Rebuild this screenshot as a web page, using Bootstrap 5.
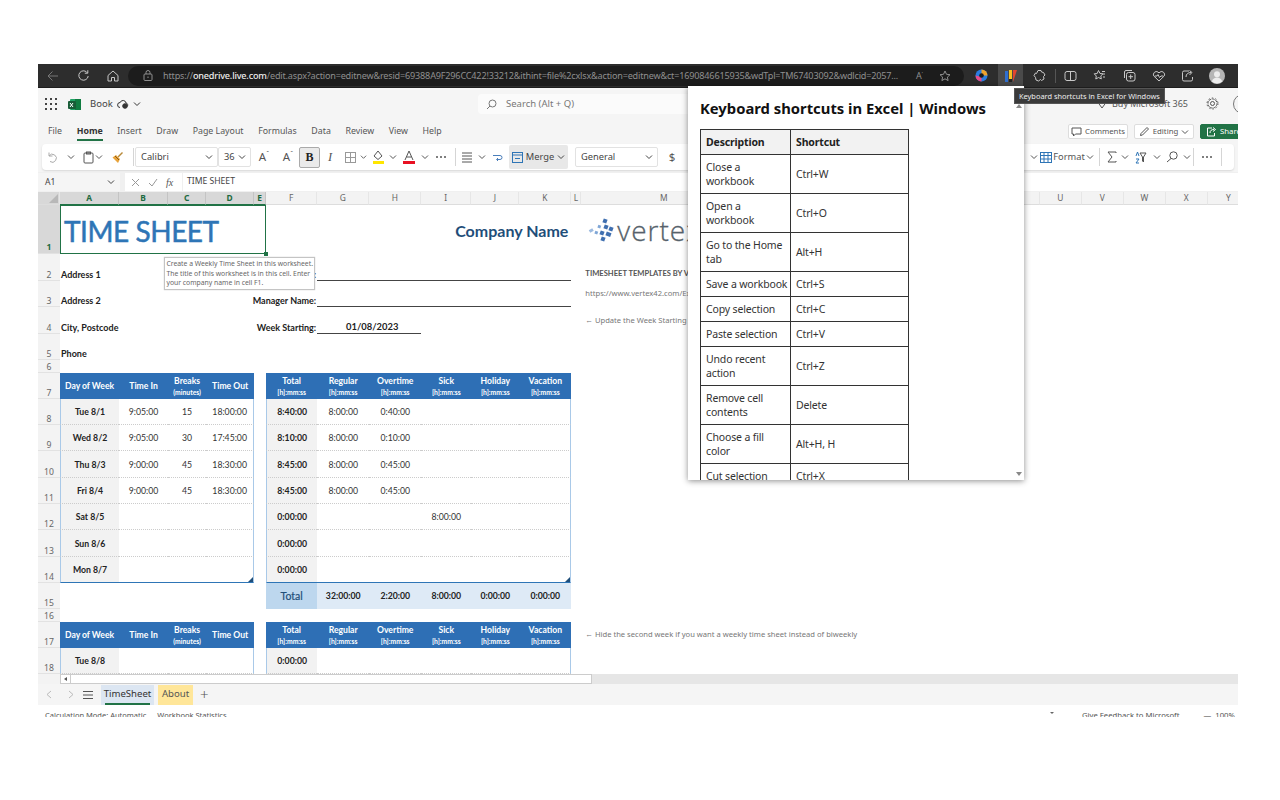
<!DOCTYPE html>
<html lang="en">
<head>
<meta charset="utf-8">
<title>Time Sheet - Excel</title>
<link href="https://cdn.jsdelivr.net/npm/bootstrap@5.3.0/dist/css/bootstrap.min.css" rel="stylesheet">
<style>
body{background:#fff;margin:0;font-family:"Noto Sans","Open Sans",sans-serif;color:#333}
.shotwin{margin:64px 0 0 38px;width:1200px;height:654px;overflow:hidden;position:relative;background:#fff}
.ic{display:block;fill:none;stroke:currentColor;stroke-width:1;flex:none}

/* browser */
.brbar{height:24px;background:#2d2d2d;color:#c8c8c8;border-bottom:1px solid #1d1d1d}
.brbtn{width:30px;justify-content:center;align-items:center;display:flex;flex:none}
.brbtn.dim{color:#777}
.urlpill{background:#1c1c1c;height:20px;width:836px;margin-left:0;margin-right:2.500px;border-radius:10px;padding-left:15px;font-size:9.100px;color:#8f8f8f;white-space:nowrap;overflow:hidden;flex:none}
.urlpill b{color:#eee;font-weight:500}
.urltext{width:745px;overflow:hidden;margin-left:10px;letter-spacing:-.02em}
.urlaa{margin-left:8px;font-size:9px}
.urlaa sup{font-size:6px}
.tool26{width:29.400px;height:24px;display:flex;align-items:center;justify-content:center;flex:none}
.tool26.on{background:linear-gradient(90deg,#2d2d2d 2px,#4a4a4a 2px,#4a4a4a 27px,#2d2d2d 27px)}
.brsep{width:1px;height:14px;background:#555;flex:none}

/* title */
.titlebar{height:32px;background:#f5f5f5;font-size:9.500px;position:relative}
.waffle{margin-left:7px;margin-right:11px}
.bookname{margin-left:9px;margin-right:4px;color:#444;padding-top:1px}
.searchbox{position:absolute;left:440px;top:6px;width:260px;height:20px;background:#fbfbfb;border-radius:4px;color:#777;font-size:9.500px;padding-left:8px;gap:9px}
.buyms{position:absolute;left:1059px;top:9px;color:#555;gap:5px;font-size:9px}
.gear{position:absolute;left:1168px;top:9px;color:#555}
.avatarc{position:absolute;left:1195px;top:6px;width:20px;height:20px;border:1px solid #777;border-radius:50%}

/* menu tabs */
.menubar{height:22px;background:#f5f5f5;font-size:8.800px;color:#555;padding-left:10px;position:relative;gap:14.600px}
.menutab{line-height:22px;position:relative}
.menutab.act{font-weight:700;color:#333}
.menutab.act::after{content:"";position:absolute;left:0;right:0;bottom:1px;height:2px;background:#217346}
.pillbtn{border:1px solid #ddd;background:#fff;border-radius:2px;height:15px;font-size:7.800px;color:#555;gap:3px;width:60px;justify-content:center;flex:none}
.rightbtns{position:absolute;left:1030px;top:4px;gap:6px}
.sharebtn{background:#217346;color:#fff;border-color:#217346;width:50px;justify-content:flex-start;padding-left:5px}

/* ribbon */
.ribbonbg{height:30px;background:#f5f5f5;padding:2px 4px 2px 4px}
.ribbon{height:26px;background:#fff;border-radius:4px;padding-left:1px;padding-right:11px;box-shadow:0 1px 2px rgba(0,0,0,.12);font-size:9.300px;color:#555}
.ti{display:flex;align-items:center;justify-content:center;height:26px;flex:none}
.w4{width:4px}.w7{width:7px}.w8{width:8px}.w10{width:10px}.w14{width:14px}.w18{width:18px}.w20{width:20px}.w21{width:21px}.w22{width:22px}.w24{width:24px}.w26{width:26px}.w28{width:28px}.w32{width:32px}.w33{width:33px}.w59{width:59px}.w83{width:83px}
.sepv{width:1px;height:18px;background:#d5d5d5;margin:0 auto}
.selbox{height:20px;border:1px solid #e2e2e2;border-radius:2px;padding:0 4px 0 5px;justify-content:space-between;color:#444}
.boldbtn{height:21px;background:#eaeaea;border:1px solid #aaa;border-radius:2px;font-weight:700;font-size:12px;color:#222;font-family:"Liberation Serif",serif}
.ital{font-family:"Liberation Serif",serif;font-style:italic;font-size:12.500px}
.mergebtn{background:#e8e8e8;height:24px;gap:3px;border-radius:2px;color:#444}
.cap{font-size:11.500px;color:#555}
.cap sup{font-size:7px}

/* formula */
.fxbar{height:20px;background:#f0f0f0;font-size:8.600px;color:#444;padding-top:1px}
.namebox{width:82px;height:18px;background:#f5f5f5;padding:0 5px 0 7px;justify-content:space-between;flex:none}
.fxbtns{width:57px;height:18px;margin-left:5px;background:#fff;color:#999;gap:8px;padding-left:6px;flex:none}
.fxinput{flex:1;height:18px;margin-left:1px;background:#fff;padding-left:4px;line-height:16px}
.fxlabel{font-family:"Liberation Serif",serif;font-style:italic;color:#555;font-size:10px}

/* sheet */
.sheetwrap{height:482px;overflow:hidden;position:relative}
.gridtbl{border-collapse:separate;border-spacing:0;table-layout:fixed;width:1212px;font-family:Lato,"Liberation Sans",sans-serif;font-size:9px;color:#222}
.gridtbl td,.gridtbl th{padding:0;white-space:nowrap;overflow:visible;line-height:1}
.gridtbl col.c0{width:22px}.gridtbl col.ca{width:59px}.gridtbl col.cb{width:49px}.gridtbl col.cc{width:38px}.gridtbl col.cd{width:48px}.gridtbl col.ce{width:12px}
.gridtbl col.cf{width:51px}.gridtbl col.cg{width:52px}.gridtbl col.ch{width:52px}.gridtbl col.ci{width:50px}.gridtbl col.cj{width:48px}.gridtbl col.ck{width:52px}.gridtbl col.cl{width:10px}.gridtbl col.cm{width:166px}.gridtbl col.cn{width:292px}.gridtbl col.cu{width:42px}
.hdrow{height:13px}
.hdrow th{font-family:"Noto Sans",sans-serif;font-size:8.400px;font-weight:400;color:#666;text-align:center;background:#f3f3f3;border-bottom:1px solid #ddd;border-right:1px solid #e6e6e6}
.hdrow th.colsel{background:#d8d8d8;color:#1e6b41;font-weight:700;border-bottom:1px solid #217346;border-right-color:#c4c4c4}
.hdrow th.corner{background:#d8d8d8;position:relative}
.hdrow th.corner::after{content:"";position:absolute;right:1px;bottom:1px;border-style:solid;border-width:0 0 9px 9px;border-color:transparent transparent #b8b8b8 transparent}
.rh{background:#f3f3f3;font-family:"Noto Sans",sans-serif;font-size:8.600px;color:#666;text-align:center;vertical-align:bottom;border-bottom:1px solid #e2e2e2}
.rh.rsel{background:#d8d8d8;color:#1e6b41;font-weight:700;padding-bottom:1px!important}
.h13{height:13px}.h26{height:26px}.h27{height:27px}.h49{height:49px}
.selcell{border:1.500px solid #217346;position:relative;vertical-align:middle;padding:3px 0 0 3px!important;box-sizing:border-box}
.selcell::after{content:"";position:absolute;right:-3px;bottom:-3px;width:4px;height:4px;background:#217346}
.sheettitle{font-size:28px;letter-spacing:-.45px;color:#2e75b6;font-weight:400;-webkit-text-stroke:.5px #2e75b6}
.company{font-size:16px;font-weight:700;color:#1f4e79;text-align:right;vertical-align:middle;padding:3px 3px 0 0!important}
.lbl{font-weight:700;vertical-align:bottom;padding:0 0 2px 1px!important;font-size:9px}
.lblr{text-align:right;padding:0 1px 2px 0!important}
.uline{border-bottom:1px solid #444}
.uval{text-align:center;font-weight:700;vertical-align:bottom;padding:0 0 2px 6px!important;font-size:9.400px}
.note{font-family:"Noto Sans",sans-serif;font-size:7.600px;color:#777;padding-left:4px!important}
.note.strong{font-weight:700;color:#555;font-family:Lato,sans-serif;font-size:7.600px;vertical-align:bottom;padding-bottom:3px!important}
.hcell{background:#2e6fb5;color:#fff;text-align:center;font-weight:700;font-size:8.600px;vertical-align:middle;padding-top:1px!important}
.hcell small{display:block;font-size:6.800px;margin-top:4px;font-weight:700}
.dcell{text-align:center;vertical-align:middle;border-bottom:1px dotted #ccc;color:#333;font-size:8.700px;padding-top:2px!important}
.dcell.end{border-bottom:1px solid #2e75b6}
.dcell.gray{background:#f2f2f2;font-weight:700;color:#222}
.bl{border-left:1px solid #a9c9e8}
.brr{border-right:1px solid #a9c9e8}
.cornermark{position:relative}
.cornermark::after{content:"";position:absolute;right:0;bottom:0;border-style:solid;border-width:0 0 5px 5px;border-color:transparent transparent #1f4e79 transparent}
.totlbl{background:#bdd7ee;color:#1f4e79;font-size:10.500px;text-align:center;font-weight:400;-webkit-text-stroke:.2px #1f4e79;vertical-align:middle}
.totval{background:#deeaf6;font-weight:700;text-align:center;vertical-align:middle;font-size:8.700px;color:#222}
.notebox{position:absolute;left:126px;top:65px;width:151px;height:33px;background:#fff;border:1px solid #c4c4c4;box-shadow:0 0 1px #bbb;font-family:"Noto Sans",sans-serif;font-size:6.800px;line-height:9.600px;color:#666;padding:1px 0 0 1.500px;white-space:nowrap;z-index:2}
.logoword{font-family:"Open Sans",sans-serif;font-weight:300;font-size:28px;color:#56626b;letter-spacing:1px;-webkit-text-stroke:.3px #56626b}
.logocell{vertical-align:middle;padding-left:5px!important}
.logoflex{gap:3px}

/* bottom */
.hscroll{height:10px;background:#e6e6e6}
.hs0{width:22px;background:#f3f3f3}
.hsbtn{width:11px;background:#fff;border:1px solid #ccc;flex:none;display:flex;align-items:center;justify-content:center}
.hsbtn::before{content:"";border-style:solid;border-width:2.500px 3px 2.500px 0;border-color:transparent #555 transparent transparent}
.hsthumb{width:521px;background:#fff;border:1px solid #ccc;border-left:0;flex:none}
.tabbar{height:21px;background:#f5f5f5;font-size:9.600px;color:#555}
.navch{color:#bbb;width:22px;justify-content:center;flex:none}
.navburger{margin-left:1px}
.shtab{height:20px;line-height:18px;text-align:center;position:relative;flex:none}
.shtab.tcur{background:#dce6f2;width:53px;margin-left:8px;margin-right:4px;color:#333}
.shtab.tcur::after{content:"";position:absolute;left:4px;right:4px;bottom:0;height:2px;background:#217346}
.shtab.tabout{background:#ffe699;width:35px}
.plusb{font-size:15px;color:#555;margin-left:7px;font-weight:300;line-height:1}
.statusb{height:12px;background:#fff;font-size:7.500px;color:#555;position:relative;overflow:hidden;line-height:20px;padding-left:7px;white-space:nowrap}
.statusb span{display:inline-block;margin-right:11px}
.statright{position:absolute;left:1044px;top:0;white-space:nowrap;font-size:7.700px}
.statright span{margin-right:24px}
.statright span:last-child{margin-right:0}
.carret{position:absolute;left:1012px;top:7px;border-style:solid;border-width:2px 2px 0 2px;border-color:#666 transparent transparent transparent}

/* popup */
.popupext{position:absolute;left:650px;top:22px;width:336px;height:394px;background:#fff;box-shadow:0 1px 6px rgba(0,0,0,.45);overflow:hidden;z-index:5;padding:11px 12px 0 12px}
.popupext h1{font-family:"Noto Sans","Open Sans",sans-serif;font-weight:700;font-size:14.800px;color:#111;margin:0 0 10px 0;line-height:22px;white-space:nowrap}
.sctable{width:209px;table-layout:fixed;font-size:10.500px;letter-spacing:-.15px;line-height:14px;color:#333;border-color:#333;margin:0}
.sctable td,.sctable th{padding:5px 0 5px 5px;vertical-align:middle;border:1px solid #333;color:#333;background:#fff;box-shadow:none}
.sctable th{background:#f2f2f2;font-weight:700;color:#222}
.sctable .c1{width:90px}
.scup,.scdn{position:absolute;left:328px;border-style:solid}
.scup{top:18px;border-width:0 3px 4px 3px;border-color:transparent transparent #888 transparent}
.scdn{top:386px;border-width:4px 3px 0 3px;border-color:#888 transparent transparent transparent}
.exttip{position:absolute;left:976px;top:24px;background:#3a3a3a;color:#eee;font-size:7.400px;height:16px;line-height:15px;width:151px;padding-left:4px;z-index:6;white-space:nowrap;border:1px solid #555}
</style>
</head>
<body>
<svg width="0" height="0" class="position-absolute">
  <symbol id="chev" viewBox="0 0 8 8"><path d="M1 2.500 4 5.500 7 2.500" fill="none" stroke="currentColor"/></symbol>
  <symbol id="dots3" viewBox="0 0 12 4"><circle cx="2" cy="2" r="1" fill="currentColor"/><circle cx="6" cy="2" r="1" fill="currentColor"/><circle cx="10" cy="2" r="1" fill="currentColor"/></symbol>
</svg>
<div class="shotwin">

  <!-- browser toolbar -->
  <div class="brbar d-flex align-items-center">
    <div class="brbtn dim"><svg class="ic" width="12" height="12" viewBox="0 0 12 12"><path d="M11 6H1M5.500 1.500 1 6l4.500 4.500"/></svg></div>
    <div class="brbtn"><svg class="ic" width="13" height="13" viewBox="0 0 13 13"><path d="M10.500 4A4.700 4.700 0 1 0 11.200 7M10.800 1.200V4.200H7.800"/></svg></div>
    <div class="brbtn"><svg class="ic" width="12" height="12" viewBox="0 0 12 12"><path d="M1 5.500 6 1l5 4.500V11H7.500V7.500h-3V11H1z"/></svg></div>
    <div class="urlpill d-flex align-items-center">
      <svg class="ic" width="10" height="11" viewBox="0 0 10 11"><rect x="1" y="4" width="8" height="6.500" rx="1"/><path d="M3 4V2.500a2 2 0 0 1 4 0V4M5 6.500v1.500"/></svg>
      <div class="urltext">https://<b>onedrive.live.com</b>/edit.aspx?action=editnew&amp;resid=69388A9F296CC422!33212&amp;ithint=file%2cxlsx&amp;action=editnew&amp;ct=1690846615935&amp;wdTpl=TM67403092&amp;wdlcid=2057...</div>
      <span class="urlaa">A<sup>ʼ</sup></span>
      <svg class="ic ms-3" width="12" height="12" viewBox="0 0 12 12"><path d="M6 1l1.500 3.300 3.500.4-2.600 2.400.7 3.500L6 8.800 2.900 10.600l.7-3.500L1 4.700l3.500-.4z"/></svg>
    </div>
    <div class="tool26"><svg width="13" height="13" viewBox="0 0 13 13"><circle cx="6.500" cy="6.500" r="6" fill="#2a7de1"/><path d="M6.500 .5a6 6 0 0 1 6 6H6.500z" fill="#f0a32b"/><path d="M.5 6.500a6 6 0 0 0 6 6V8z" fill="#e94b8a"/><circle cx="6.500" cy="6.500" r="2.300" fill="#1c1c1c"/></svg></div>
    <div class="tool26 on"><svg width="14" height="14" viewBox="0 0 14 14"><rect x="1" y="2" width="3" height="11" fill="#2f6fd0"/><rect x="5" y="1" width="3" height="9" fill="#f4c020"/><path d="M9 1h4L9 13z" fill="#e0452f"/><rect x="5" y="10" width="3" height="3" fill="#222"/></svg></div>
    <div class="tool26"><svg class="ic" width="13" height="13" viewBox="0 0 13 13"><path d="M5 1.500h3l.5 1.500 2 .5L12 6l-1.500 1.500L11 10 8.500 11.500l-1-1-2 1.500L3 11 2.500 8.500 1 6.500 2.500 4l1 .5z"/></svg></div>
    <div class="brsep"></div>
    <div class="tool26"><svg class="ic" width="13" height="12" viewBox="0 0 13 12"><rect x="1" y="1.500" width="11" height="9" rx="2"/><path d="M6.500 1.500v9"/></svg></div>
    <div class="tool26"><svg class="ic" width="13" height="13" viewBox="0 0 13 13"><path d="M5.500 1.500 7 4.500l3 .3-2.200 2.100.5 3L5.500 8.500 2.800 10l.5-3L1.200 4.800l3-.3zM9 2.500h3M10 5h2M10 8h2"/></svg></div>
    <div class="tool26"><svg class="ic" width="13" height="13" viewBox="0 0 13 13"><rect x="3.500" y="3.500" width="8.500" height="8.500" rx="2"/><path d="M1.500 9V3A1.500 1.500 0 0 1 3 1.500h6M7.700 5.500v4.500M5.500 7.700H10"/></svg></div>
    <div class="tool26"><svg class="ic" width="14" height="12" viewBox="0 0 14 12"><path d="M7 11 1.800 6A3 3 0 0 1 6 2l1 1 1-1a3 3 0 0 1 4.200 4zM3 6h2l1-1.500 1.500 3L9 6h2"/></svg></div>
    <div class="tool26"><svg class="ic" width="13" height="13" viewBox="0 0 13 13"><path d="M8 2H3a1.500 1.500 0 0 0-1.500 1.500v7A1.500 1.500 0 0 0 3 12h7a1.500 1.500 0 0 0 1.500-1.500V8M5 8c0-3 2-4.500 5-4.500M8.500 1.500l2.500 2-2.500 2.500"/></svg></div>
    <div class="tool26"><svg width="16" height="16" viewBox="0 0 16 16"><circle cx="8" cy="8" r="8" fill="#b5b5b5"/><circle cx="8" cy="6.200" r="3" fill="#ececec"/><path d="M2.800 13.500c1-3 3-4 5.200-4s4.200 1 5.200 4a8 8 0 0 1-10.400 0z" fill="#ececec"/></svg></div>
  </div>

  <!-- excel title -->
  <div class="titlebar d-flex align-items-center">
    <svg class="waffle" width="12" height="12" viewBox="0 0 12 12" fill="#444"><rect x="0" y="0" width="2" height="2"/><rect x="5" y="0" width="2" height="2"/><rect x="10" y="0" width="2" height="2"/><rect x="0" y="5" width="2" height="2"/><rect x="5" y="5" width="2" height="2"/><rect x="10" y="5" width="2" height="2"/><rect x="0" y="10" width="2" height="2"/><rect x="5" y="10" width="2" height="2"/><rect x="10" y="10" width="2" height="2"/></svg>
    <svg width="13" height="13" viewBox="0 0 13 13"><rect x="2" y="1" width="11" height="11" rx="1" fill="#21a366"/><rect x="7" y="1" width="6" height="11" fill="#107c41"/><rect x="0" y="3" width="8" height="8" rx="1" fill="#185c37"/><path d="M2 5l3 4M5 5 2 9" stroke="#fff" stroke-width="1"/></svg>
    <span class="bookname">Book</span>
    <svg class="ic me-1" width="12" height="10" viewBox="0 0 12 10"><path d="M3 8.500a2.500 2.500 0 0 1 .2-5A3 3 0 0 1 9 4a2 2 0 0 1 1 3.500"/><circle cx="8" cy="7" r="2.300" fill="#333"/></svg>
    <svg width="8" height="8"><use href="#chev"/></svg>
    <div class="searchbox d-flex align-items-center">
      <svg class="ic" width="11" height="11" viewBox="0 0 11 11"><circle cx="6.500" cy="4.500" r="3.500"/><path d="M4 7 1 10"/></svg>
      <span>Search (Alt + Q)</span>
    </div>
    <div class="buyms d-flex align-items-center">
      <svg class="ic" width="10" height="10" viewBox="0 0 10 10"><path d="M1 3.500 5 9l4-5.500L7.500 1h-5z"/></svg>
      <span>Buy Microsoft 365</span>
    </div>
    <svg class="ic gear" width="13" height="13" viewBox="0 0 13 13"><circle cx="6.500" cy="6.500" r="2"/><circle cx="6.500" cy="6.500" r="4.500" stroke-dasharray="2.400 1"/><circle cx="6.500" cy="6.500" r="5.500" stroke-dasharray="1.500 2"/></svg>
    <div class="avatarc"></div>
  </div>

  <!-- ribbon tabs -->
  <div class="menubar d-flex">
    <div class="menutab">File</div>
    <div class="menutab act">Home</div>
    <div class="menutab">Insert</div>
    <div class="menutab">Draw</div>
    <div class="menutab">Page Layout</div>
    <div class="menutab">Formulas</div>
    <div class="menutab">Data</div>
    <div class="menutab">Review</div>
    <div class="menutab">View</div>
    <div class="menutab">Help</div>
    <div class="rightbtns d-flex">
      <div class="pillbtn d-flex align-items-center"><svg class="ic" width="11" height="10" viewBox="0 0 11 10"><path d="M1 1h9v6H4.500L2.500 9V7H1z"/></svg>Comments</div>
      <div class="pillbtn d-flex align-items-center"><svg class="ic" width="11" height="11" viewBox="0 0 11 11"><path d="M1.500 9.500 2 7.500 8 1.500l1.500 1.500-6 6z"/></svg>Editing<svg width="8" height="8"><use href="#chev"/></svg></div>
      <div class="pillbtn sharebtn d-flex align-items-center"><svg class="ic" width="11" height="11" viewBox="0 0 11 11"><path d="M6 2H1.500v8h7V7M4 7c0-2.500 1.500-3.500 4-3.500M7 1.500 9.500 3.500 7 5.500"/></svg>Share</div>
    </div>
  </div>

  <!-- ribbon -->
  <div class="ribbonbg">
    <div class="ribbon d-flex align-items-center">
      <div class="ti w18"><svg class="ic" width="12" height="12" viewBox="0 0 12 12" color="#aaa"><path d="M3 1.500V5h3.500M3 5a4 4 0 1 1 1 5.500"/></svg></div>
      <div class="ti w20"><svg width="8" height="8"><use href="#chev"/></svg></div>
      <div class="ti w14"><svg class="ic" width="11" height="13" viewBox="0 0 11 13"><rect x="1" y="2" width="9" height="10" rx="1"/><rect x="3.500" y="1" width="4" height="2" fill="#999"/></svg></div>
      <div class="ti w8"><svg width="8" height="8"><use href="#chev"/></svg></div>
      <div class="ti w28"><svg width="13" height="13" viewBox="0 0 13 13"><path d="M7 6 11.500 1.500" stroke="#b88a3a" stroke-width="1.500"/><path d="M5 4 9 8 7 12 1.500 6.500z" fill="#e8a33a"/><path d="M4 5 8 9" stroke="#8a5b18"/></svg></div>
      <div class="ti w4"><div class="sepv"></div></div>
      <div class="ti w83 selbox"><span>Calibri</span><svg width="8" height="8"><use href="#chev"/></svg></div>
      <div class="ti w33 selbox"><span>36</span><svg width="8" height="8"><use href="#chev"/></svg></div>
      <div class="ti w26 cap">A<sup>ˆ</sup></div>
      <div class="ti w22 cap">A<sup>ˇ</sup></div>
      <div class="ti w21 boldbtn">B</div>
      <div class="ti w20 ital">I</div>
      <div class="ti w20"><svg class="ic" width="11" height="11" viewBox="0 0 11 11" color="#999"><rect x=".5" y=".5" width="10" height="10"/><path d="M5.500 .5v10M.5 5.500h10"/></svg></div>
      <div class="ti w7"><svg width="8" height="8"><use href="#chev"/></svg></div>
      <div class="ti w22"><svg width="13" height="14" viewBox="0 0 13 14"><path d="M6 1 2 6l4 3.500L10 6z" fill="none" stroke="#555"/><rect x="1" y="11" width="11" height="3" fill="#ffe600"/></svg></div>
      <div class="ti w8"><svg width="8" height="8"><use href="#chev"/></svg></div>
      <div class="ti w24"><svg width="12" height="14" viewBox="0 0 12 14"><path d="M2 10 6 1l4 9M3.500 7h5" fill="none" stroke="#555"/><rect x="0" y="11" width="12" height="3" fill="#e81123"/></svg></div>
      <div class="ti w8"><svg width="8" height="8"><use href="#chev"/></svg></div>
      <div class="ti w24"><svg width="12" height="4"><use href="#dots3"/></svg></div>
      <div class="ti w4"><div class="sepv"></div></div>
      <div class="ti w20"><svg class="ic" width="12" height="11" viewBox="0 0 12 11"><path d="M1 1h10M1 4h10M1 7h10M1 10h10"/></svg></div>
      <div class="ti w10"><svg width="8" height="8"><use href="#chev"/></svg></div>
      <div class="ti w22"><svg class="ic" width="12" height="13" viewBox="0 0 12 13" color="#4a7ebb"><path d="M1 4.500h7a2 2 0 0 1 0 4H5M6 7 4.500 8.500 6 10"/></svg></div>
      <div class="ti w59 mergebtn"><svg class="ic" width="11" height="11" viewBox="0 0 11 11" color="#2e75b6"><rect x=".5" y=".5" width="10" height="10"/><path d="M.5 3h10M3 6.500h5"/></svg><span>Merge</span><svg width="8" height="8"><use href="#chev"/></svg></div>
      <div class="ti w7"></div>
      <div class="ti w83 selbox"><span>General</span><svg width="8" height="8"><use href="#chev"/></svg></div>
      <div class="ti w28 cap">$</div>

      <div class="ti w10 ms-auto"><svg width="8" height="8"><use href="#chev"/></svg></div>
      <div class="ti w14"><svg class="ic" width="12" height="11" viewBox="0 0 12 11" color="#2e75b6"><rect x=".5" y=".5" width="11" height="10"/><path d="M.5 3.500h11M.5 7h11M4 .5v10M8 .5v10"/></svg></div>
      <div class="ti w32">Format</div>
      <div class="ti w10"><svg width="8" height="8"><use href="#chev"/></svg></div>
      <div class="ti w8"><div class="sepv"></div></div>
      <div class="ti w18"><svg class="ic" width="10" height="12" viewBox="0 0 10 12"><path d="M9 2V1H1l4 5-4 5h8v-1"/></svg></div>
      <div class="ti w8"><svg width="8" height="8"><use href="#chev"/></svg></div>
      <div class="ti w24"><svg class="ic" width="12" height="13" viewBox="0 0 12 13"><path d="M5 2h6L8.500 6v5l-1-1V6z"/><path d="M1 5l1.500-4L4 5M1 8h3L1 12h3" color="#2e75b6"/></svg></div>
      <div class="ti w8"><svg width="8" height="8"><use href="#chev"/></svg></div>
      <div class="ti w22"><svg class="ic" width="12" height="12" viewBox="0 0 12 12"><circle cx="7.500" cy="4.500" r="3.700"/><path d="M5 7.500 1 11"/></svg></div>
      <div class="ti w8"><svg width="8" height="8"><use href="#chev"/></svg></div>
      <div class="ti w4"><div class="sepv"></div></div>
      <div class="ti w24"><svg width="12" height="4"><use href="#dots3"/></svg></div>
      <div class="ti w4"><div class="sepv"></div></div>
    </div>
  </div>

  <!-- formula bar -->
  <div class="fxbar d-flex">
    <div class="namebox d-flex align-items-center"><span>A1</span><svg width="8" height="8"><use href="#chev"/></svg></div>
    <div class="fxbtns d-flex align-items-center">
      <svg class="ic" width="9" height="9" viewBox="0 0 9 9"><path d="M1 1l7 7M8 1 1 8"/></svg>
      <svg class="ic" width="10" height="9" viewBox="0 0 10 9"><path d="M1 5l3 3 5-7"/></svg>
      <span class="fxlabel">fx</span>
    </div>
    <div class="fxinput">TIME SHEET</div>
  </div>

  <!-- grid -->
  <div class="sheetwrap">
    <table class="gridtbl">
      <colgroup><col class="c0"><col class="ca"><col class="cb"><col class="cc"><col class="cd"><col class="ce"><col class="cf"><col class="cg"><col class="ch"><col class="ci"><col class="cj"><col class="ck"><col class="cl"><col class="cm"><col class="cn"><col class="cu"><col class="cu"><col class="cu"><col class="cu"><col class="cu"></colgroup>
      <tr class="hdrow"><th class="corner"></th><th class="colsel">A</th><th class="colsel">B</th><th class="colsel">C</th><th class="colsel">D</th><th class="colsel">E</th><th>F</th><th>G</th><th>H</th><th>I</th><th>J</th><th>K</th><th>L</th><th>M</th><th></th><th>U</th><th>V</th><th>W</th><th>X</th><th>Y</th></tr>
      <tr class="h49"><td class="rh rsel">1</td><td colspan="5" class="selcell"><span class="sheettitle">TIME SHEET</span></td><td colspan="6" class="company">Company Name</td><td></td><td class="logocell"><div class="d-flex align-items-center logoflex"><svg width="28" height="26" viewBox="0 0 28 26"><g fill="#3f6fb0"><rect x="17" y="2" width="4" height="4" transform="rotate(20 19 4)"/><rect x="12" y="8" width="3" height="3" transform="rotate(20 13 9)" fill="#7fa6d6"/><rect x="18" y="8" width="4" height="4" transform="rotate(20 20 10)"/><rect x="23" y="10" width="4" height="4" transform="rotate(20 25 12)"/><rect x="3" y="12" width="4" height="3" transform="rotate(-30 5 13)" fill="#9dbbe0"/><rect x="9" y="14" width="3" height="3" transform="rotate(20 10 15)" fill="#7fa6d6"/><rect x="14" y="14" width="4" height="4" transform="rotate(20 16 16)"/><rect x="20" y="15" width="5" height="4" transform="rotate(20 22 17)"/><rect x="15" y="20" width="4" height="4" transform="rotate(20 17 22)"/></g></svg><span class="logoword">vertex42</span></div></td></tr>
      <tr class="h27"><td class="rh">2</td><td colspan="3" class="lbl">Address 1</td><td colspan="3" class="lbl lblr">Employee Name:</td><td class="uline"></td><td class="uline"></td><td class="uline"></td><td class="uline"></td><td class="uline"></td><td></td><td class="note strong">TIMESHEET TEMPLATES BY VERTEX42</td></tr>
      <tr class="h26"><td class="rh">3</td><td colspan="3" class="lbl">Address 2</td><td colspan="3" class="lbl lblr">Manager Name:</td><td class="uline"></td><td class="uline"></td><td class="uline"></td><td class="uline"></td><td class="uline"></td><td></td><td class="note">https://www.vertex42.com/ExcelTemplates/time-sheet.html</td></tr>
      <tr class="h27"><td class="rh">4</td><td colspan="3" class="lbl">City, Postcode</td><td colspan="3" class="lbl lblr">Week Starting:</td><td colspan="2" class="uline uval">01/08/2023</td><td colspan="4"></td><td class="note">← Update the Week Starting date to change the dates in the table</td></tr>
      <tr class="h26"><td class="rh">5</td><td colspan="5" class="lbl">Phone</td></tr>
      <tr class="h13"><td class="rh">6</td></tr>
      <tr class="h26"><td class="rh">7</td><td class="hcell">Day of Week</td><td class="hcell">Time In</td><td class="hcell">Breaks<small>(minutes)</small></td><td class="hcell">Time Out</td><td></td><td class="hcell">Total<small>[h]:mm:ss</small></td><td class="hcell">Regular<small>[h]:mm:ss</small></td><td class="hcell">Overtime<small>[h]:mm:ss</small></td><td class="hcell">Sick<small>[h]:mm:ss</small></td><td class="hcell">Holiday<small>[h]:mm:ss</small></td><td class="hcell">Vacation<small>[h]:mm:ss</small></td></tr>
      <tr class="h26"><td class="rh">8</td><td class="dcell gray bl">Tue 8/1</td><td class="dcell">9:05:00</td><td class="dcell">15</td><td class="dcell brr">18:00:00</td><td></td><td class="dcell gray bl">8:40:00</td><td class="dcell">8:00:00</td><td class="dcell">0:40:00</td><td class="dcell"></td><td class="dcell"></td><td class="dcell brr"></td></tr>
      <tr class="h26"><td class="rh">9</td><td class="dcell gray bl">Wed 8/2</td><td class="dcell">9:05:00</td><td class="dcell">30</td><td class="dcell brr">17:45:00</td><td></td><td class="dcell gray bl">8:10:00</td><td class="dcell">8:00:00</td><td class="dcell">0:10:00</td><td class="dcell"></td><td class="dcell"></td><td class="dcell brr"></td></tr>
      <tr class="h27"><td class="rh">10</td><td class="dcell gray bl">Thu 8/3</td><td class="dcell">9:00:00</td><td class="dcell">45</td><td class="dcell brr">18:30:00</td><td></td><td class="dcell gray bl">8:45:00</td><td class="dcell">8:00:00</td><td class="dcell">0:45:00</td><td class="dcell"></td><td class="dcell"></td><td class="dcell brr"></td></tr>
      <tr class="h26"><td class="rh">11</td><td class="dcell gray bl">Fri 8/4</td><td class="dcell">9:00:00</td><td class="dcell">45</td><td class="dcell brr">18:30:00</td><td></td><td class="dcell gray bl">8:45:00</td><td class="dcell">8:00:00</td><td class="dcell">0:45:00</td><td class="dcell"></td><td class="dcell"></td><td class="dcell brr"></td></tr>
      <tr class="h26"><td class="rh">12</td><td class="dcell gray bl">Sat 8/5</td><td class="dcell"></td><td class="dcell"></td><td class="dcell brr"></td><td></td><td class="dcell gray bl">0:00:00</td><td class="dcell"></td><td class="dcell"></td><td class="dcell">8:00:00</td><td class="dcell"></td><td class="dcell brr"></td></tr>
      <tr class="h27"><td class="rh">13</td><td class="dcell gray bl">Sun 8/6</td><td class="dcell"></td><td class="dcell"></td><td class="dcell brr"></td><td></td><td class="dcell gray bl">0:00:00</td><td class="dcell"></td><td class="dcell"></td><td class="dcell"></td><td class="dcell"></td><td class="dcell brr"></td></tr>
      <tr class="h26"><td class="rh">14</td><td class="dcell gray bl end">Mon 8/7</td><td class="dcell end"></td><td class="dcell end"></td><td class="dcell brr end cornermark"></td><td></td><td class="dcell gray bl end">0:00:00</td><td class="dcell end"></td><td class="dcell end"></td><td class="dcell end"></td><td class="dcell end"></td><td class="dcell brr end cornermark"></td></tr>
      <tr class="h26"><td class="rh">15</td><td colspan="4"></td><td></td><td class="totlbl">Total</td><td class="totval">32:00:00</td><td class="totval">2:20:00</td><td class="totval">8:00:00</td><td class="totval">0:00:00</td><td class="totval">0:00:00</td></tr>
      <tr class="h13"><td class="rh">16</td></tr>
      <tr class="h26"><td class="rh">17</td><td class="hcell">Day of Week</td><td class="hcell">Time In</td><td class="hcell">Breaks<small>(minutes)</small></td><td class="hcell">Time Out</td><td></td><td class="hcell">Total<small>[h]:mm:ss</small></td><td class="hcell">Regular<small>[h]:mm:ss</small></td><td class="hcell">Overtime<small>[h]:mm:ss</small></td><td class="hcell">Sick<small>[h]:mm:ss</small></td><td class="hcell">Holiday<small>[h]:mm:ss</small></td><td class="hcell">Vacation<small>[h]:mm:ss</small></td><td></td><td class="note">← Hide the second week if you want a weekly time sheet instead of biweekly</td></tr>
      <tr class="h26"><td class="rh">18</td><td class="dcell gray bl">Tue 8/8</td><td class="dcell"></td><td class="dcell"></td><td class="dcell brr"></td><td></td><td class="dcell gray bl">0:00:00</td><td class="dcell"></td><td class="dcell"></td><td class="dcell"></td><td class="dcell"></td><td class="dcell brr"></td></tr>
    </table>
    <div class="notebox">Create a Weekly Time Sheet in this worksheet.<br>The title of this worksheet is in this cell. Enter<br>your company name in cell F1.</div>
  </div>

  <!-- h scroll -->
  <div class="hscroll d-flex">
    <div class="hs0"></div>
    <div class="hsbtn"></div>
    <div class="hsthumb"></div>
  </div>

  <!-- sheet tabs -->
  <div class="tabbar d-flex align-items-center">
    <div class="navch d-flex"><svg class="ic" width="6" height="9" viewBox="0 0 6 9"><path d="M5 1 1 4.500 5 8"/></svg></div>
    <div class="navch d-flex"><svg class="ic" width="6" height="9" viewBox="0 0 6 9"><path d="M1 1l4 3.500L1 8"/></svg></div>
    <svg class="ic navburger" width="10" height="8" viewBox="0 0 10 8"><path d="M0 .5h10M0 4h10M0 7.500h10"/></svg>
    <div class="shtab tcur">TimeSheet</div>
    <div class="shtab tabout">About</div>
    <div class="plusb">+</div>
  </div>

  <!-- status -->
  <div class="statusb">
    <span>Calculation Mode: Automatic</span><span>Workbook Statistics</span>
    <div class="carret"></div>
    <div class="statright"><span>Give Feedback to Microsoft</span><span>—&nbsp; 100%</span></div>
  </div>

  <!-- tooltip -->
  <div class="exttip">Keyboard shortcuts in Excel for Windows</div>

  <!-- extension popup -->
  <div class="popupext">
    <h1>Keyboard shortcuts in Excel | Windows</h1>
    <table class="table table-bordered sctable">
      <colgroup><col class="c1"><col></colgroup>
      <thead><tr><th>Description</th><th>Shortcut</th></tr></thead>
      <tbody>
        <tr><td>Close a workbook</td><td>Ctrl+W</td></tr>
        <tr><td>Open a workbook</td><td>Ctrl+O</td></tr>
        <tr><td>Go to the Home tab</td><td>Alt+H</td></tr>
        <tr><td>Save a workbook</td><td>Ctrl+S</td></tr>
        <tr><td>Copy selection</td><td>Ctrl+C</td></tr>
        <tr><td>Paste selection</td><td>Ctrl+V</td></tr>
        <tr><td>Undo recent action</td><td>Ctrl+Z</td></tr>
        <tr><td>Remove cell contents</td><td>Delete</td></tr>
        <tr><td>Choose a fill color</td><td>Alt+H, H</td></tr>
        <tr><td>Cut selection</td><td>Ctrl+X</td></tr>
      </tbody>
    </table>
    <div class="scup"></div>
    <div class="scdn"></div>
  </div>
</div>
<script src="https://cdn.jsdelivr.net/npm/bootstrap@5.3.0/dist/js/bootstrap.bundle.min.js"></script>
</body>
</html>
